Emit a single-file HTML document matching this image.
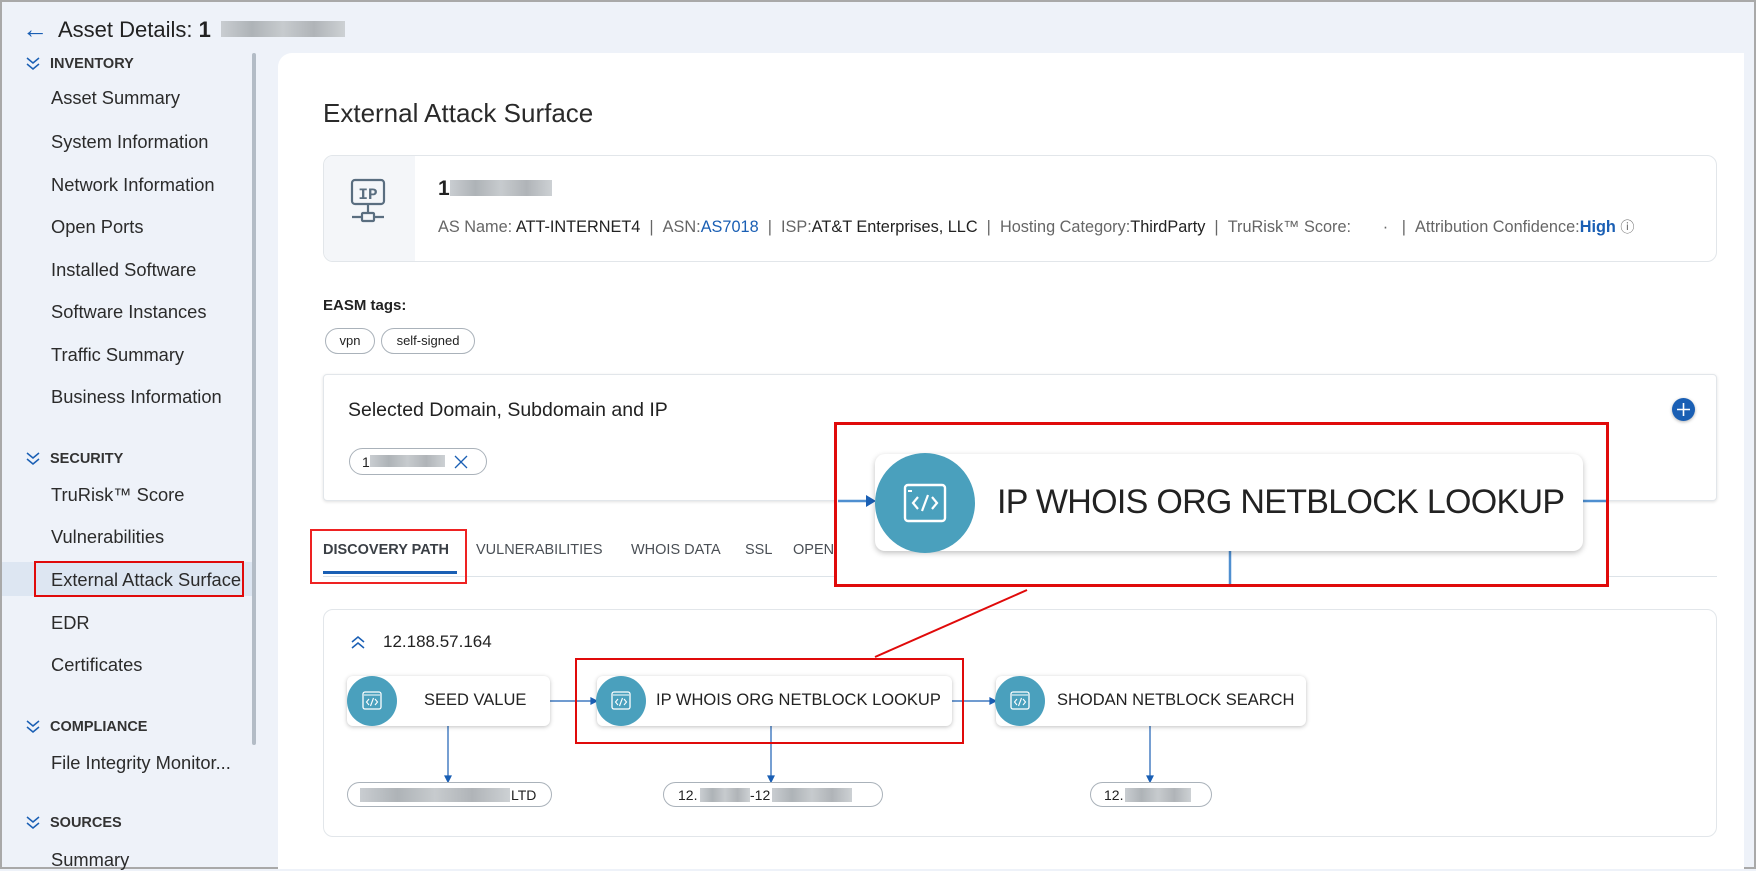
<!DOCTYPE html>
<html><head><meta charset="utf-8"><style>
*{box-sizing:border-box;margin:0;padding:0}
body{width:1756px;height:869px;overflow:hidden;background:#eef2f9;font-family:"Liberation Sans",Arial,sans-serif;color:#222;position:relative}
.a{position:absolute;white-space:nowrap}
.frame{position:absolute;left:0;top:0;width:1756px;height:869px;border:2px solid #a9a9a9;pointer-events:none}
.blur{position:absolute;background:linear-gradient(90deg,#c9cdd1,#aeb3b7,#c7cbce,#b0b4b8,#cdd1d4)}
.side{font-size:18.3px;color:#2b2b2b;left:51px}
.hdr{font-size:14.5px;font-weight:bold;color:#333;left:50px}
.chev{left:25px;width:16px;height:16px}
.card{position:absolute;background:#fff;border:1px solid #e2e6ea;border-radius:10px}
.pill{position:absolute;border:1px solid #aab2ba;border-radius:14px;background:#fff;font-size:13px}
.node{position:absolute;background:#fff;border-radius:6px;box-shadow:0 1px 4px rgba(0,0,0,.25);font-size:16.5px;color:#222}
.circ{position:absolute;border-radius:50%;background:#4aa0bd}
.red{position:absolute;border:2.5px solid #e00a0a}
.tab{font-size:14.5px;color:#4a4f55;top:542px}
</style></head><body>
<div class="frame"></div>
<div class="a" style="left:22px;top:14px;font-size:26px;color:#1a5fb4">&#8592;</div>
<div class="a" style="left:58px;top:17px;font-size:22px;color:#222">Asset Details: <b>1</b></div>
<div class="blur" style="left:221px;top:21px;width:124px;height:16px"></div>

<svg class="a chev" style="top:55px" viewBox="0 0 16 16"><path d="M2 3l6 5 6-5M2 9l6 5 6-5" fill="none" stroke="#1a5fb4" stroke-width="1.5"/></svg>
<div class="a hdr" style="top:56px">INVENTORY</div>
<div class="a side" style="top:87px">Asset Summary</div>
<div class="a side" style="top:131px">System Information</div>
<div class="a side" style="top:174px">Network Information</div>
<div class="a side" style="top:216px">Open Ports</div>
<div class="a side" style="top:259px">Installed Software</div>
<div class="a side" style="top:301px">Software Instances</div>
<div class="a side" style="top:344px">Traffic Summary</div>
<div class="a side" style="top:386px">Business Information</div>
<svg class="a chev" style="top:450px" viewBox="0 0 16 16"><path d="M2 3l6 5 6-5M2 9l6 5 6-5" fill="none" stroke="#1a5fb4" stroke-width="1.5"/></svg>
<div class="a hdr" style="top:451px">SECURITY</div>
<div class="a side" style="top:484px">TruRisk™ Score</div>
<div class="a side" style="top:526px">Vulnerabilities</div>
<div class="a" style="left:2px;top:562px;width:252px;height:34px;background:#dde6f2"></div>
<div class="a side" style="top:569px">External Attack Surface</div>
<div class="red" style="left:34px;top:561px;width:210px;height:36px;border-width:2px"></div>
<div class="a side" style="top:612px">EDR</div>
<div class="a side" style="top:654px">Certificates</div>
<svg class="a chev" style="top:718px" viewBox="0 0 16 16"><path d="M2 3l6 5 6-5M2 9l6 5 6-5" fill="none" stroke="#1a5fb4" stroke-width="1.5"/></svg>
<div class="a hdr" style="top:719px">COMPLIANCE</div>
<div class="a side" style="top:752px">File Integrity Monitor...</div>
<svg class="a chev" style="top:814px" viewBox="0 0 16 16"><path d="M2 3l6 5 6-5M2 9l6 5 6-5" fill="none" stroke="#1a5fb4" stroke-width="1.5"/></svg>
<div class="a hdr" style="top:815px">SOURCES</div>
<div class="a side" style="top:849px">Summary</div>
<div class="a" style="left:252px;top:53px;width:4px;height:692px;background:#b3bcc6;border-radius:2px"></div>

<div class="a" style="left:278px;top:53px;width:1466px;height:816px;background:#fff;border-radius:14px 0 0 0"></div>
<div class="a" style="left:323px;top:98px;font-size:26px;color:#2a2a2a">External Attack Surface</div>

<div class="card" style="left:323px;top:155px;width:1394px;height:107px;overflow:hidden">
  <div class="a" style="left:0;top:0;width:91px;height:107px;background:#f4f6f9"></div>
  <svg class="a" style="left:26px;top:22px" width="36" height="46" viewBox="0 0 36 46"><rect x="2" y="2" width="32" height="24" rx="3" fill="none" stroke="#5a6e80" stroke-width="2.2"/><text x="18" y="21" font-family="Liberation Mono,monospace" font-size="16" font-weight="bold" fill="#5a6e80" text-anchor="middle">IP</text><path d="M18 26v8M2 39h10M24 39h10" stroke="#5a6e80" stroke-width="2.2"/><rect x="12" y="35" width="12" height="8" rx="1" fill="none" stroke="#5a6e80" stroke-width="2.2"/></svg>
  <div class="a" style="left:114px;top:21px;font-size:21px;font-weight:bold">1</div>
  <div class="blur" style="left:126px;top:24px;width:102px;height:16px"></div>
  <div class="a" style="left:114px;top:61px;font-size:16.3px;color:#666">AS Name: <span style="color:#222">ATT-INTERNET4</span> &nbsp;| &nbsp;ASN:<span style="color:#1a5fb4">AS7018</span> &nbsp;| &nbsp;ISP:<span style="color:#222">AT&amp;T Enterprises, LLC</span> &nbsp;| &nbsp;Hosting Category:<span style="color:#222">ThirdParty</span> &nbsp;| &nbsp;TruRisk™ Score: &nbsp; &nbsp; &nbsp; · &nbsp;&nbsp;| &nbsp;Attribution Confidence:<b style="color:#1a5fb4">High</b> <span style="font-size:14px">ⓘ</span></div>
</div>

<div class="a" style="left:323px;top:297px;font-size:15px;font-weight:bold;color:#222">EASM tags:</div>
<div class="pill" style="left:325px;top:328px;width:50px;height:26px;text-align:center;line-height:24px">vpn</div>
<div class="pill" style="left:381px;top:328px;width:94px;height:26px;text-align:center;line-height:24px">self-signed</div>

<div class="card" style="left:323px;top:374px;width:1394px;height:127px;border-radius:4px;box-shadow:0 1px 3px rgba(0,0,0,.12)">
  <div class="a" style="left:24px;top:24px;font-size:19.5px;color:#222">Selected Domain, Subdomain and IP</div>
  <div class="pill" style="left:25px;top:73px;width:138px;height:27px"><span class="a" style="left:12px;top:5px;font-size:14px">1</span><div class="blur" style="left:20px;top:6px;width:75px;height:12px"></div><svg class="a" style="left:104px;top:6px" width="14" height="14"><path d="M1 1l12 12M13 1L1 13" stroke="#1a5fb4" stroke-width="1.3"/></svg></div>
  <div class="a" style="left:1348px;top:23px;width:23px;height:23px;border-radius:50%;background:#1a5fb4;box-shadow:0 1px 3px rgba(0,0,0,.3)"><svg width="23" height="23"><path d="M11.5 5v13M5 11.5h13" stroke="#fff" stroke-width="1.6"/></svg></div>
</div>

<div class="a tab" style="left:323px;font-weight:bold;color:#3a3f45">DISCOVERY PATH</div>
<div class="a tab" style="left:476px">VULNERABILITIES</div>
<div class="a tab" style="left:631px">WHOIS DATA</div>
<div class="a tab" style="left:745px">SSL</div>
<div class="a tab" style="left:793px">OPEN</div>
<div class="a" style="left:323px;top:576px;width:1394px;height:1px;background:#dde3e8"></div>
<div class="a" style="left:323px;top:571px;width:134px;height:3px;background:#1a5fb4"></div>
<div class="red" style="left:310px;top:529px;width:157px;height:55px;border-width:2px;border-color:#e22"></div>

<div class="card" style="left:323px;top:609px;width:1394px;height:228px"></div>
<svg class="a" style="left:350px;top:634px" width="16" height="16" viewBox="0 0 16 16"><path d="M2 8l6-5 6 5M2 14l6-5 6 5" fill="none" stroke="#1a5fb4" stroke-width="1.5"/></svg>
<div class="a" style="left:383px;top:632px;font-size:17px">12.188.57.164</div>

<svg class="a" style="left:0;top:0" width="1756" height="869">
 <g stroke="#1a5fb4" stroke-width="1.2" fill="#1a5fb4">
  <line x1="550" y1="701" x2="593" y2="701"/><path d="M597 701l-6-3v6z"/>
  <line x1="952" y1="701" x2="992" y2="701"/><path d="M996 701l-6-3v6z"/>
  <line x1="448" y1="726" x2="448" y2="777"/><path d="M448 782l-3-6h6z"/>
  <line x1="771" y1="726" x2="771" y2="777"/><path d="M771 782l-3-6h6z"/>
  <line x1="1150" y1="726" x2="1150" y2="777"/><path d="M1150 782l-3-6h6z"/>
 </g>
</svg>

<div class="node" style="left:347px;top:676px;width:203px;height:50px"><div class="a" style="left:77px;top:15px">SEED VALUE</div></div>
<div class="node" style="left:597px;top:676px;width:355px;height:50px"><div class="a" style="left:59px;top:15px">IP WHOIS ORG NETBLOCK LOOKUP</div></div>
<div class="node" style="left:996px;top:676px;width:310px;height:50px"><div class="a" style="left:61px;top:15px">SHODAN NETBLOCK SEARCH</div></div>

<div class="circ" style="left:347px;top:676px;width:50px;height:50px"><svg width="50" height="50"><rect x="16" y="16" width="18" height="17" rx="2" fill="none" stroke="#fff" stroke-width="1.3"/><path d="M17 19h16" stroke="#fff" stroke-width="1"/><path d="M22 23l-2.5 3 2.5 3M28 23l2.5 3-2.5 3M26.5 22l-3 8" fill="none" stroke="#fff" stroke-width="1.1"/></svg></div>
<div class="circ" style="left:596px;top:676px;width:50px;height:50px"><svg width="50" height="50"><rect x="16" y="16" width="18" height="17" rx="2" fill="none" stroke="#fff" stroke-width="1.3"/><path d="M17 19h16" stroke="#fff" stroke-width="1"/><path d="M22 23l-2.5 3 2.5 3M28 23l2.5 3-2.5 3M26.5 22l-3 8" fill="none" stroke="#fff" stroke-width="1.1"/></svg></div>
<div class="circ" style="left:995px;top:676px;width:50px;height:50px"><svg width="50" height="50"><rect x="16" y="16" width="18" height="17" rx="2" fill="none" stroke="#fff" stroke-width="1.3"/><path d="M17 19h16" stroke="#fff" stroke-width="1"/><path d="M22 23l-2.5 3 2.5 3M28 23l2.5 3-2.5 3M26.5 22l-3 8" fill="none" stroke="#fff" stroke-width="1.1"/></svg></div>

<div class="pill" style="left:347px;top:782px;width:205px;height:25px"><div class="blur" style="left:12px;top:5px;width:150px;height:14px"></div><span class="a" style="left:163px;top:4px;font-size:14px">LTD</span></div>
<div class="pill" style="left:663px;top:782px;width:220px;height:25px"><span class="a" style="left:14px;top:4px;font-size:14px">12.</span><div class="blur" style="left:36px;top:5px;width:50px;height:14px"></div><span class="a" style="left:86px;top:4px;font-size:14px">-12</span><div class="blur" style="left:108px;top:5px;width:80px;height:14px"></div></div>
<div class="pill" style="left:1090px;top:782px;width:122px;height:25px"><span class="a" style="left:13px;top:4px;font-size:14px">12.</span><div class="blur" style="left:34px;top:5px;width:66px;height:14px"></div></div>

<div class="red" style="left:575px;top:658px;width:389px;height:86px"></div>

<svg class="a" style="left:0;top:0" width="1756" height="869"><line x1="1027" y1="590" x2="875" y2="657" stroke="#e00a0a" stroke-width="2"/></svg>
<div class="a" style="left:834px;top:422px;width:775px;height:165px;background:#fff"></div>
<svg class="a" style="left:0;top:0" width="1756" height="869">
 <g stroke="#4f8fd0" stroke-width="2.5"><line x1="838" y1="501" x2="866" y2="501"/><line x1="1583" y1="501" x2="1609" y2="501"/><line x1="1230" y1="551" x2="1230" y2="587"/></g>
 <path d="M876 501l-10-6v12z" fill="#1a5fb4"/>
</svg>
<div class="node" style="left:875px;top:454px;width:708px;height:97px;border-radius:10px;box-shadow:0 2px 6px rgba(0,0,0,.25)"><div class="a" style="left:122px;top:29px;font-size:34px;color:#222;letter-spacing:-0.7px">IP WHOIS ORG NETBLOCK LOOKUP</div></div>
<div class="circ" style="left:875px;top:453px;width:100px;height:100px"><svg width="100" height="100"><rect x="30" y="32" width="40" height="36" rx="3" fill="none" stroke="#fff" stroke-width="2.4"/><path d="M33 38h4" stroke="#fff" stroke-width="2"/><path d="M43 44l-5 6 5 6M57 44l5 6-5 6M53 42l-6 16" fill="none" stroke="#fff" stroke-width="2.2"/></svg></div>
<div class="red" style="left:834px;top:422px;width:775px;height:165px;border-width:3px"></div>
</body></html>
